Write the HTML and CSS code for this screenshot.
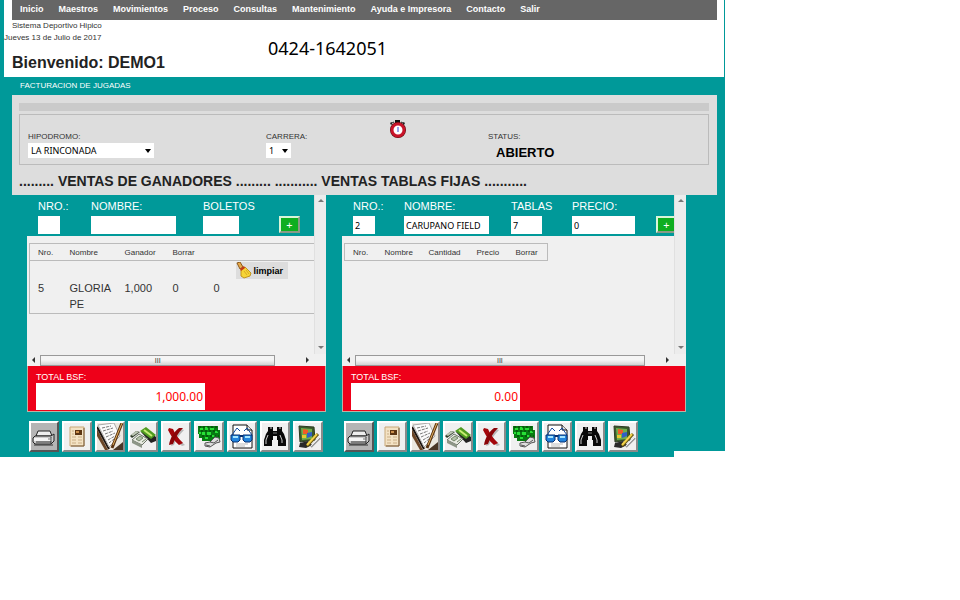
FILE: index.html
```html
<!DOCTYPE html>
<html lang="es">
<head>
    <meta charset="UTF-8">
    <meta name="viewport" content="width=device-width, initial-scale=1.0">
    <title>Sistema Deportivo Hipico</title>
    <link rel="stylesheet" href="styles.css">
</head>
<body>

<!-- Iconos de las barras de botones -->
<svg class="iconos" aria-hidden="true">
    <symbol id="imprimir" viewBox="0 0 26 27">
        <path d="M7 8h12l2 5H5z" fill="#eee" stroke="#222"/>
        <path d="M4 13h16l3-2v7l-3 3H4l-2-2v-4z" fill="#ccc" stroke="#222"/>
        <path d="M3 15h18v3H3z" fill="#f4f4f4"/>
        <path d="M5 19h15M3 22h19M20 14v7" stroke="#333" fill="none"/>
        <path d="M17 16h3" stroke="#777"/>
    </symbol>
    <symbol id="reporte" viewBox="0 0 26 27">
        <path d="M6 4h14v19H6z" fill="#f3e2c4" stroke="#c9a878"/>
        <path d="M20 5v18H7" stroke="#76583a" fill="none"/>
        <path d="M11 7h7v5h-7z" fill="#5c3513"/>
        <path d="M12 8h3v2h-3z" fill="#c98e4c"/>
        <path d="M8 8h2M8 11h2M8 14h4M8 17h4M8 20h4M14 14h4M14 17h4M14 20h4" stroke="#c9ad85"/>
    </symbol>
    <symbol id="notas" viewBox="0 0 26 27">
        <path d="M0 0h26v27H0z" fill="#ece8e0"/>
        <path d="M0 6l11 21H8L0 13z" fill="#6b4526"/>
        <path d="M0 4l12 22" stroke="#1c1410" stroke-width="2"/>
        <path d="M1 2l16-2 6 13-11 11z" fill="#fbfbfb" stroke="#aaa"/>
        <path d="M5 5l9-2M6 8l10-3M8 11l8-3M9 14l9-4M11 17l7-4M12 20l5-4" stroke="#777" stroke-dasharray="3 1"/>
        <path d="M26 19v8H16z" fill="#4a3727"/>
        <path d="M25 0L15 25" stroke="#593312" stroke-width="3"/>
        <path d="M25 0L16 22" stroke="#e3b05e" stroke-width="1"/>
    </symbol>
    <symbol id="caja" viewBox="0 0 26 27">
        <path d="M11 9l5-4 10 9v4l-5 2z" fill="#222"/>
        <path d="M10 8l6-4 10 8-5 4z" fill="#4f9b20"/>
        <path d="M14 7l8 6" stroke="#c8ec73" stroke-width="2"/>
        <path d="M2 17l7-6 9 5-6 6z" fill="#e8ebe2" stroke="#6d7568"/>
        <path d="M2 17l10 5v3L2 20z" fill="#8d9687"/>
        <path d="M6 16l4-3 3 2-4 3z" fill="#b4c1aa" stroke="#75866a"/>
        <path d="M12 19l4-3" stroke="#75866a"/>
        <path d="M0 13l6-5 4 1-8 6z" fill="#2e3a28"/>
        <path d="M1 12l5-4 3 1-6 4z" fill="#bdc6b4"/>
    </symbol>
    <symbol id="borrar" viewBox="0 0 26 27">
        <path d="M9 7c3 5 7 10 13 15l-3 1C14 19 11 15 8 9zM21 7c-4 4-8 9-10 15l-3 1c2-7 5-12 10-17z" fill="#b9b9b9"/>
        <path d="M6 5l4 1c2 5 5 9 10 14l-4 2C11 18 8 13 5 7z" fill="#a3060b"/>
        <path d="M16 5h4c-5 5-8 10-10 16l-4 1c1-7 5-13 10-17z" fill="#8b0408"/>
    </symbol>
    <symbol id="pagar" viewBox="0 0 26 27">
        <path d="M2 3h20v4h2v9h-5v2H6v-3H3v-4H2z" fill="#087b12"/>
        <path d="M4 5h3v2H4zM9 4h3v3H9zM14 5h4v2h-4zM19 8h3v2h-3zM6 9h3v3H6zM11 9h4v3h-4zM16 12h3v2h-3zM9 14h3v2H9zM3 9h2v2H3z" fill="#27df36"/>
        <path d="M3 4h18M5 8h17M6 13h17" stroke="#013c05" stroke-dasharray="2 2"/>
        <path d="M9 20l5-1 5-5 4 1 1 4-4 1-6 4-5-1z" fill="#ddd" stroke="#555"/>
        <path d="M14 19l4 1 4-3M10 22l4 1" stroke="#555" fill="none"/>
    </symbol>
    <symbol id="ver" viewBox="0 0 26 27">
        <path d="M4 2h14l5 5v18H4z" fill="#fff" stroke="#111" stroke-width="1"/>
        <path d="M18 2v5h5" fill="#ddd" stroke="#111"/>
        <path d="M3 12l5-7 3 3M23 12l-5-7-3 3" stroke="#124ca0" fill="none"/>
        <path d="M7 21h12M7 23h9" stroke="#bbb"/>
        <path d="M2 12h9v5l-2 2H4l-2-2zM14 12h9v5l-2 2h-5l-2-2z" fill="#2284dd" stroke="#062f70"/>
        <path d="M11 13h3" stroke="#062f70" stroke-width="2"/>
        <path d="M4 14h5M16 14h5" stroke="#a3e4ff" stroke-width="2"/>
    </symbol>
    <symbol id="buscar" viewBox="0 0 26 27">
        <path d="M6 4h5v4h4V4h5v4l2 3 2 6v6h-8v-6h-1v-4h-4v4h-1v6H2v-6l2-6 2-3z" fill="#080808"/>
        <path d="M6 12l-2 5v4M18 12l2 5v3M8 5h2M17 5h2" stroke="#ccc" fill="none"/>
        <path d="M11 10h4" stroke="#777"/>
    </symbol>
    <symbol id="equipo" viewBox="0 0 26 27">
        <path d="M4 3l15 1 1 13-15 2z" fill="#3b5a2b" stroke="#2c3a22"/>
        <path d="M6 5l11 1v10l-10 1z" fill="#6fae4c"/>
        <path d="M8 6l5 1v4H8z" fill="#f15b27"/>
        <path d="M12 10l5-1v4l-5 2z" fill="#315fc6"/>
        <path d="M7 12h4v3H7z" fill="#e6c831"/>
        <path d="M5 20l8-2 4 4-6 3-7-1z" fill="#292929"/>
        <path d="M23 11L12 23" stroke="#6b5a14" stroke-width="3"/>
        <path d="M22 11L12 22" stroke="#f4d44a" stroke-width="2"/>
        <path d="M25 15l-9 9" stroke="#999" stroke-width="2"/>
        <path d="M25 14l-9 9" stroke="#eee"/>
    </symbol>
</svg>

<div class="pagina">
    <header class="cabecera">
        <nav class="menu">
            <a href="#">Inicio</a>
            <a href="#">Maestros</a>
            <a href="#">Movimientos</a>
            <a href="#">Proceso</a>
            <a href="#">Consultas</a>
            <a href="#">Mantenimiento</a>
            <a href="#">Ayuda e Impresora</a>
            <a href="#">Contacto</a>
            <a href="#">Salir</a>
        </nav>
        <div class="bienvenida">
            <div class="usuario">
                <p class="sistema">Sistema Deportivo Hipico</p>
                <p>Jueves 13 de Julio de 2017</p>
                <h1>Bienvenido: DEMO1</h1>
            </div>
            <p class="telefono">0424-1642051</p>
        </div>
    </header>

    <h2 class="titulo">FACTURACION DE JUGADAS</h2>

    <section class="jugadas">
        <div class="franja"></div>
        <div class="datos">
            <div class="campo">
                <label for="hipodromo">HIPODROMO:</label>
                <span class="lista lista-hipodromo">
                    <select id="hipodromo"><option>LA RINCONADA</option></select>
                </span>
            </div>
            <div class="campo">
                <label for="carrera">CARRERA:</label>
                <span class="lista">
                    <select id="carrera"><option>1</option></select>
                </span>
            </div>
            <svg class="reloj" viewBox="0 0 18 20" aria-hidden="true">
                <path d="M6 1h5v3H6z" fill="#111"/>
                <path d="M1 5l4-2M16 5l-4-2M2 3l1 3M15 3l-1 3" stroke="#222" stroke-width="1"/>
                <circle cx="9" cy="11" r="6" fill="#fff" stroke="#5a0a0d" stroke-width="4"/>
                <circle cx="9" cy="11" r="6" fill="#fff" stroke="#c9142a" stroke-width="3"/>
                <path d="M9 8v5" stroke="#3447d5"/>
            </svg>
            <div class="campo">
                <span>STATUS:</span>
                <strong class="status">ABIERTO</strong>
            </div>
        </div>
        <h2 class="ventas">......... VENTAS DE GANADORES ......... ........... VENTAS TABLAS FIJAS ...........</h2>
    </section>

    <main class="paneles">
        <section class="panel">
            <div class="visor">
                <div class="contenido">
                    <form class="entrada entrada-ganadores">
                        <label for="nroGanador">NRO.:</label>
                        <label for="nombreGanador">NOMBRE:</label>
                        <label for="boletos">BOLETOS</label>
                        <input type="text" id="nroGanador" class="corto">
                        <input type="text" id="nombreGanador" class="nombre">
                        <input type="text" id="boletos" class="medio">
                        <button type="button" class="agregar">+</button>
                    </form>
                    <table class="tabla tabla-ganadores">
                        <thead>
                            <tr><th>Nro.</th><th>Nombre</th><th>Ganador</th><th>Borrar</th><th></th><th></th></tr>
                        </thead>
                        <tbody>
                            <tr>
                                <td colspan="5"></td>
                                <td class="acciones">
                                    <button type="button" class="limpiar">
                                        <svg viewBox="0 0 16 17" aria-hidden="true">
                                            <path d="M1 1l3-1 3 5-3 2z" fill="#e8aa4c" stroke="#8b591b"/>
                                            <path d="M5 8l4-3 6 6-1 3-6 2-3-2z" fill="#f6d536" stroke="#c2951f"/>
                                            <path d="M4 7l4-3 1 2-4 3z" fill="#c53a16"/>
                                            <path d="M8 9l3 4M10 8l3 4" stroke="#d8ab25"/>
                                        </svg>
                                        limpiar
                                    </button>
                                </td>
                            </tr>
                            <tr><td>5</td><td>GLORIA PE</td><td>1,000</td><td>0</td><td>0</td><td></td></tr>
                        </tbody>
                    </table>
                </div>
                <div class="barra-vertical"></div>
                <div class="barra-horizontal"><span class="pulgar pulgar-ganadores">III</span></div>
            </div>
            <div class="total">
                <label for="totalGanadores">TOTAL BSF:</label>
                <input type="text" id="totalGanadores" value="1,000.00">
            </div>
            <div class="botones">
                <button type="button" class="activo" aria-label="Imprimir"><svg><use href="#imprimir"/></svg></button>
                <button type="button" aria-label="Reporte"><svg><use href="#reporte"/></svg></button>
                <button type="button" aria-label="Notas"><svg><use href="#notas"/></svg></button>
                <button type="button" aria-label="Caja"><svg><use href="#caja"/></svg></button>
                <button type="button" aria-label="Borrar"><svg><use href="#borrar"/></svg></button>
                <button type="button" aria-label="Pagar"><svg><use href="#pagar"/></svg></button>
                <button type="button" aria-label="Ver"><svg><use href="#ver"/></svg></button>
                <button type="button" aria-label="Buscar"><svg><use href="#buscar"/></svg></button>
                <button type="button" aria-label="Equipo"><svg><use href="#equipo"/></svg></button>
            </div>
        </section>

        <section class="panel">
            <div class="visor">
                <div class="contenido">
                    <form class="entrada entrada-tablas">
                        <label for="nroTabla">NRO.:</label>
                        <label for="nombreTabla">NOMBRE:</label>
                        <label for="tablas">TABLAS</label>
                        <label for="precio">PRECIO:</label>
                        <input type="text" id="nroTabla" class="corto" value="2">
                        <input type="text" id="nombreTabla" class="nombre" value="CARUPANO FIELD">
                        <input type="text" id="tablas" class="tablas" value="7">
                        <input type="text" id="precio" class="precio" value="0">
                        <button type="button" class="agregar">+</button>
                    </form>
                    <table class="tabla tabla-fijas">
                        <thead>
                            <tr><th>Nro.</th><th>Nombre</th><th>Cantidad</th><th>Precio</th><th>Borrar</th></tr>
                        </thead>
                    </table>
                </div>
                <div class="barra-vertical"></div>
                <div class="barra-horizontal"><span class="pulgar pulgar-tablas">III</span></div>
            </div>
            <div class="total">
                <label for="totalTablas">TOTAL BSF:</label>
                <input type="text" id="totalTablas" value="0.00">
            </div>
            <div class="botones">
                <button type="button" class="activo" aria-label="Imprimir"><svg><use href="#imprimir"/></svg></button>
                <button type="button" aria-label="Reporte"><svg><use href="#reporte"/></svg></button>
                <button type="button" aria-label="Notas"><svg><use href="#notas"/></svg></button>
                <button type="button" aria-label="Caja"><svg><use href="#caja"/></svg></button>
                <button type="button" aria-label="Borrar"><svg><use href="#borrar"/></svg></button>
                <button type="button" aria-label="Pagar"><svg><use href="#pagar"/></svg></button>
                <button type="button" aria-label="Ver"><svg><use href="#ver"/></svg></button>
                <button type="button" aria-label="Buscar"><svg><use href="#buscar"/></svg></button>
                <button type="button" aria-label="Equipo"><svg><use href="#equipo"/></svg></button>
            </div>
        </section>
    </main>
</div>

</body>
</html>
```
FILE: styles.css
```css
* {
    box-sizing: border-box;
}

body {
    margin: 0;
    background-color: #fff;
    color: #333;
    font-family: "Liberation Sans", Arial, sans-serif;
    font-size: 8px;
}

h1, h2, p {
    margin: 0;
}

input, select, button {
    margin: 0;
    padding: 0;
    border: none;
    border-radius: 0;
    font-family: "Noto Sans", Tahoma, sans-serif;
    font-size: 9px;
    color: #000;
}

.iconos {
    display: none;
}

.pagina {
    position: relative;
    max-width: 725px;
    padding-bottom: 5px;
    background-color: #009999;
}

/* recorte blanco de la esquina inferior */
.pagina::after {
    content: "";
    position: absolute;
    right: 0;
    bottom: 0;
    width: 51px;
    height: 6px;
    background-color: #fff;
}

/* Cabecera */
.cabecera {
    margin: 0 1px 0 4px;
    background-color: #fff;
}

.menu {
    display: flex;
    gap: 15px;
    height: 20px;
    margin: 0 7px 0 8px;
    padding-left: 8px;
    background-color: #666;
    line-height: 18px;
}

.menu a {
    color: #fff;
    font-size: 9px;
    font-weight: bold;
    text-decoration: none;
    white-space: nowrap;
}

.bienvenida {
    display: flex;
    height: 57px;
}

.usuario {
    width: 264px;
    line-height: 12px;
}

.usuario .sistema,
.usuario h1 {
    padding-left: 8px;
}

.usuario h1 {
    padding-top: 9px;
    color: #222;
    font-size: 16px;
    line-height: 20px;
}

.telefono {
    padding-top: 16px;
    color: #000;
    font-family: "Noto Sans", sans-serif;
    font-size: 18px;
    line-height: 24px;
}

.titulo {
    padding-left: 20px;
    color: #fff;
    font-size: 8px;
    font-weight: normal;
    line-height: 18px;
}

/* Datos de la carrera */
.jugadas {
    height: 100px;
    margin: 0 8px 0 12px;
    padding: 8px 8px 0 7px;
    background-color: #ddd;
}

.franja {
    height: 8px;
    background-color: #cacaca;
}

.datos {
    display: grid;
    grid-template-columns: 238px 123px 99px 1fr;
    height: 51px;
    margin-top: 3px;
    padding-left: 8px;
    border: 1px solid #bbb;
}

.campo {
    padding-top: 15px;
    line-height: 13px;
}

.campo label,
.campo > span {
    display: block;
}

.campo .lista {
    position: relative;
    width: 25px;
    height: 15px;
}

.campo .lista-hipodromo {
    width: 126px;
}

.lista select {
    width: 100%;
    height: 15px;
    padding-left: 3px;
    background-color: #fff;
    appearance: none;
}

.lista::after {
    content: "";
    position: absolute;
    right: 3px;
    top: 6px;
    border: 3px solid transparent;
    border-top: 4px solid #000;
    border-bottom: none;
    pointer-events: none;
}

.reloj {
    width: 18px;
    height: 20px;
    margin-top: 4px;
}

.status {
    display: block;
    padding-left: 8px;
    color: #000;
    font-size: 13px;
    line-height: 20px;
}

.ventas {
    color: #222;
    font-size: 14px;
    line-height: 32px;
    white-space: nowrap;
}

/* Paneles de venta */
.paneles {
    display: grid;
    grid-template-columns: 299fr 344fr;
    gap: 16px;
    padding: 0 39px 0 27px;
}

.panel {
    min-width: 0;
}

.visor {
    display: grid;
    grid-template-columns: minmax(0, 1fr) 12px;
    grid-template-rows: 159px 12px;
    background-color: #f0f0f0;
}

.contenido {
    overflow: hidden;
}

.entrada {
    display: grid;
    grid-template-rows: 21px 18px;
    height: 41px;
    padding-left: 11px;
    background-color: #009999;
}

.entrada-ganadores {
    grid-template-columns: 53px 112px 76px 21px;
}

.entrada-tablas {
    grid-template-columns: 51px 107px 61px 84px 21px;
}

.entrada label {
    color: #fff;
    font-size: 11px;
    line-height: 23px;
}

.entrada input {
    height: 18px;
    padding-left: 2px;
    background-color: #fff;
}

.entrada .corto {
    grid-column: 1;
    width: 22px;
}

.entrada .nombre {
    width: 85px;
}

.entrada .medio {
    width: 36px;
}

.entrada .tablas {
    width: 31px;
}

.entrada .precio {
    width: 63px;
}

.agregar {
    width: 21px;
    height: 17px;
    border: 2px solid;
    border-color: #d8f5d8 #8a9a86 #8a9a86 #d8f5d8;
    background-color: #0fae20;
    color: #fff;
    font-size: 11px;
    line-height: 12px;
}

.tabla {
    margin: 7px 0 0 2px;
    border: 1px solid #bbb;
    border-collapse: collapse;
    table-layout: fixed;
}

.tabla th,
.tabla td {
    padding: 0 0 0 8px;
    text-align: left;
}

.tabla thead tr {
    border-bottom: 1px solid #bbb;
}

.tabla th {
    height: 17px;
    font-weight: normal;
    white-space: nowrap;
}

.tabla td {
    padding-bottom: 1px;
    font-size: 11px;
    line-height: 16px;
    vertical-align: top;
}

.tabla-ganadores {
    width: 320px;
}

.tabla-ganadores th:nth-child(1) { width: 32px; }
.tabla-ganadores th:nth-child(2) { width: 55px; }
.tabla-ganadores th:nth-child(3) { width: 48px; }
.tabla-ganadores th:nth-child(4) { width: 41px; }
.tabla-ganadores th:nth-child(5) { width: 30px; }

.tabla-fijas {
    width: 204px;
}

.tabla-fijas th:nth-child(1) { width: 32px; }
.tabla-fijas th:nth-child(2) { width: 44px; }
.tabla-fijas th:nth-child(3) { width: 48px; }
.tabla-fijas th:nth-child(4) { width: 39px; }

.tabla .acciones {
    padding: 1px 0 1px 0;
}

.limpiar {
    display: flex;
    align-items: center;
    gap: 2px;
    width: 52px;
    height: 17px;
    background-color: #ddd;
    font-family: "Liberation Sans", Arial, sans-serif;
    font-weight: bold;
}

.limpiar svg {
    flex: none;
    width: 16px;
    height: 17px;
}

/* Barras de desplazamiento */
.barra-vertical,
.barra-horizontal {
    display: flex;
    align-items: center;
    justify-content: space-between;
    background-color: #ececec;
}

.barra-vertical {
    flex-direction: column;
    padding: 4px 0 5px;
    border-left: 1px solid #e0e0e0;
}

.barra-horizontal {
    padding: 0 5px;
    background-color: #f0f0f0;
}

.barra-vertical::before,
.barra-vertical::after,
.barra-horizontal::before,
.barra-horizontal::after {
    content: "";
    border: 3px solid transparent;
}

.barra-vertical::before {
    border-top: none;
    border-bottom-color: #777;
}

.barra-vertical::after {
    border-bottom: none;
    border-top-color: #777;
}

.barra-horizontal::before {
    border-left: none;
    border-right-color: #333;
}

.barra-horizontal::after {
    border-right: none;
    border-left-color: #333;
}

.pulgar {
    height: 11px;
    margin: 0 auto 0 5px;
    border: 1px solid #999;
    background: linear-gradient(#f5f5f5 45%, #d2d2d2);
    color: #333;
    font-size: 7px;
    line-height: 9px;
    text-align: center;
}

.pulgar-ganadores {
    width: 85%;
}

.pulgar-tablas {
    width: 90%;
}

/* Totales */
.total {
    height: 46px;
    padding: 5px 8px 0;
    border: 1px solid #b9b4a4;
    border-top: none;
    background-color: #ee0019;
}

.total label {
    display: block;
    color: #fff;
    font-size: 9px;
    line-height: 12px;
}

.total input {
    width: 169px;
    height: 27px;
    padding-right: 2px;
    background-color: #fff;
    color: #f00;
    font-size: 12px;
    text-align: right;
}

.botones {
    display: flex;
    gap: 3px;
    padding: 9px 0 0 2px;
}

.botones button {
    width: 30px;
    height: 31px;
    border: 2px solid;
    border-color: #fff #8a8a8a #8a8a8a #fff;
    background-color: #f0f0f0;
}

.botones .activo {
    border-color: #fff #555 #555 #fff;
    background-color: #b5b5b5;
}

.botones svg {
    display: block;
    width: 26px;
    height: 27px;
}
```
